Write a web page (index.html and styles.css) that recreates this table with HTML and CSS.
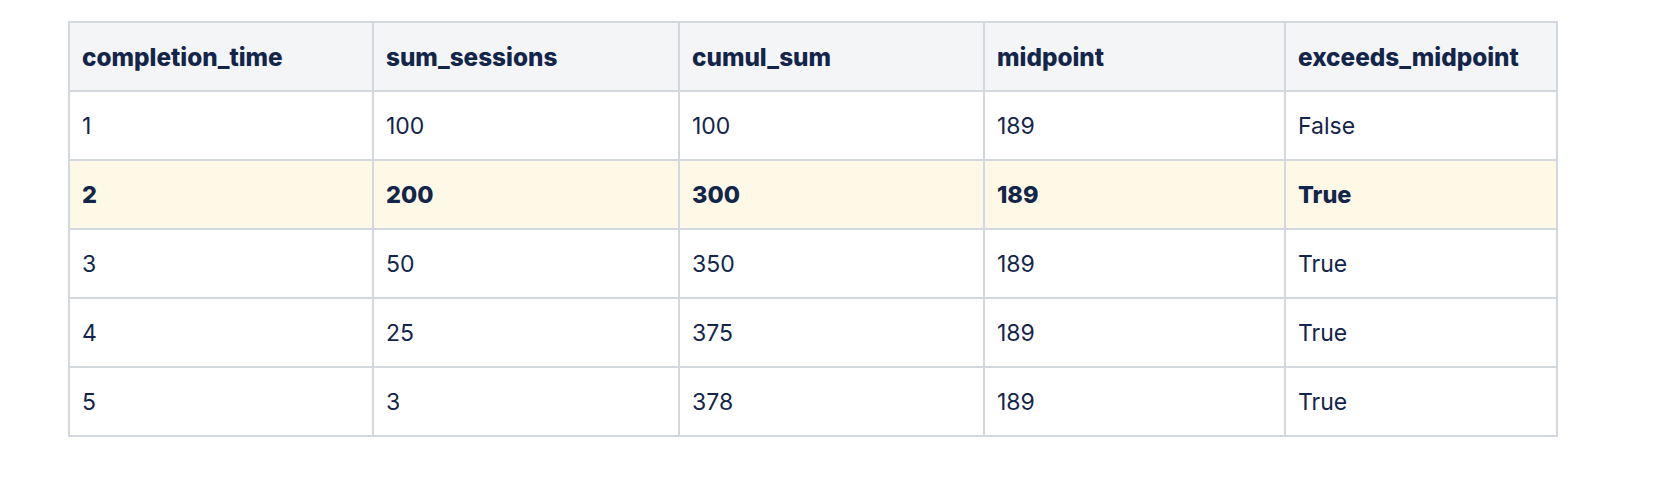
FILE: index.html
```html
<!DOCTYPE html>
<html>
<head>
<meta charset="utf-8">
<link rel="stylesheet" href="styles.css">
</head>
<body>
<div class="wrap">
<table class="data">
<colgroup>
<col class="c1"><col class="c2"><col class="c3"><col class="c4"><col class="c5">
</colgroup>
<thead>
<tr><th>completion_time</th><th>sum_sessions</th><th>cumul_sum</th><th>midpoint</th><th>exceeds_midpoint</th></tr>
</thead>
<tbody>
<tr><td>1</td><td>100</td><td>100</td><td>189</td><td>False</td></tr>
<tr class="hl"><td>2</td><td>200</td><td>300</td><td>189</td><td>True</td></tr>
<tr><td>3</td><td>50</td><td>350</td><td>189</td><td>True</td></tr>
<tr><td>4</td><td>25</td><td>375</td><td>189</td><td>True</td></tr>
<tr><td>5</td><td>3</td><td>378</td><td>189</td><td>True</td></tr>
</tbody>
</table>
</div>
</body>
</html>
```
FILE: styles.css
```css
html, body {
  margin: 0;
  padding: 0;
  background: #ffffff;
}
.wrap {
  padding: 21px 0 0 68px;
}
.data {
  border-collapse: collapse;
  width: 1488px;
  table-layout: fixed;
  font-family: Inter, "Liberation Sans", sans-serif;
  font-size: 23px;
  color: #13264a;
}
.c1 { width: 304px; }
.c2 { width: 306px; }
.c3 { width: 305px; }
.c4 { width: 301px; }
.c5 { width: 272px; }
.data th, .data td {
  border: 2px solid #d3d8df;
  height: 69px;
  padding: 0 12px;
  text-align: left;
  vertical-align: middle;
  box-sizing: border-box;
}
.data th {
  background: #f4f5f7;
  font-weight: 800;
  font-size: 24.3px;
}
.data td {
  font-weight: 400;
}
.data tr.hl td {
  background: #fef8e6;
  font-weight: 800;
  font-size: 23.5px;
}
```
